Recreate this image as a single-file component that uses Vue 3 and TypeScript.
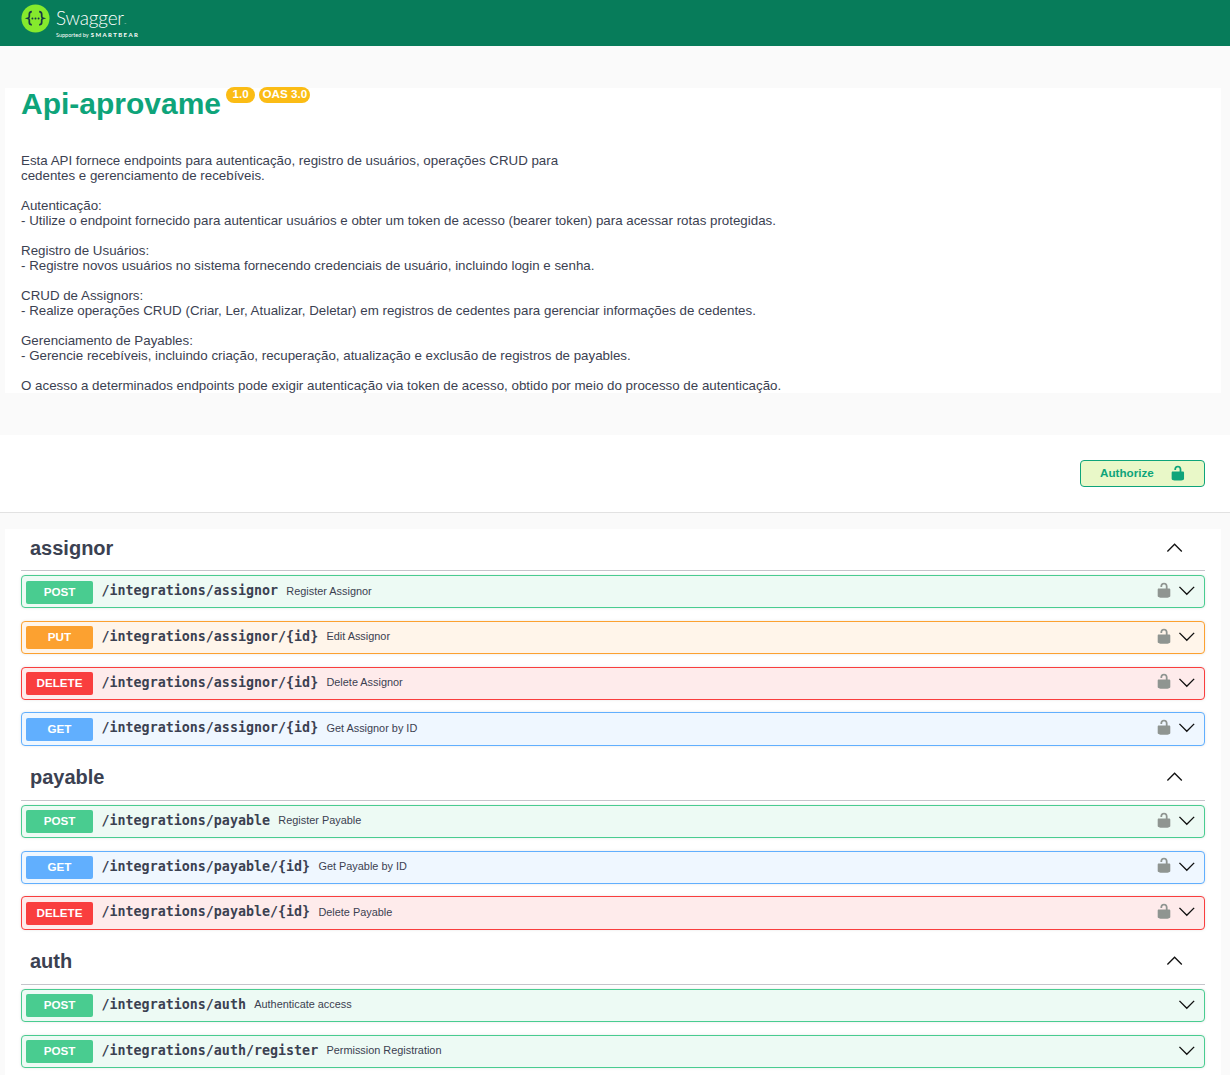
<script setup lang="ts">
type Method = 'post' | 'put' | 'delete' | 'get'

interface Operation {
  method: Method
  path: string
  summary: string
  locked: boolean
}

interface Tag {
  name: string
  operations: Operation[]
}

const description = `Esta API fornece endpoints para autenticação, registro de usuários, operações CRUD para
cedentes e gerenciamento de recebíveis.

Autenticação:
- Utilize o endpoint fornecido para autenticar usuários e obter um token de acesso (bearer token) para acessar rotas protegidas.

Registro de Usuários:
- Registre novos usuários no sistema fornecendo credenciais de usuário, incluindo login e senha.

CRUD de Assignors:
- Realize operações CRUD (Criar, Ler, Atualizar, Deletar) em registros de cedentes para gerenciar informações de cedentes.

Gerenciamento de Payables:
- Gerencie recebíveis, incluindo criação, recuperação, atualização e exclusão de registros de payables.

O acesso a determinados endpoints pode exigir autenticação via token de acesso, obtido por meio do processo de autenticação.`

const tags: Tag[] = [
  {
    name: 'assignor',
    operations: [
      { method: 'post', path: '/integrations/assignor', summary: 'Register Assignor', locked: true },
      { method: 'put', path: '/integrations/assignor/{id}', summary: 'Edit Assignor', locked: true },
      { method: 'delete', path: '/integrations/assignor/{id}', summary: 'Delete Assignor', locked: true },
      { method: 'get', path: '/integrations/assignor/{id}', summary: 'Get Assignor by ID', locked: true },
    ],
  },
  {
    name: 'payable',
    operations: [
      { method: 'post', path: '/integrations/payable', summary: 'Register Payable', locked: true },
      { method: 'get', path: '/integrations/payable/{id}', summary: 'Get Payable by ID', locked: true },
      { method: 'delete', path: '/integrations/payable/{id}', summary: 'Delete Payable', locked: true },
    ],
  },
  {
    name: 'auth',
    operations: [
      { method: 'post', path: '/integrations/auth', summary: 'Authenticate access', locked: false },
      { method: 'post', path: '/integrations/auth/register', summary: 'Permission Registration', locked: false },
    ],
  },
]

const lockPath =
  'M15.8 8H14V5.6C14 2.703 12.665 1 10 1 7.334 1 6 2.703 6 5.6V6h2v-.801C8 3.754 8.797 3 10 3c1.203 0 2 .754 2 2.199V8H4c-.553 0-1 .646-1 1.199V17c0 .549.428 1.139.951 1.307l1.197.387C5.672 18.861 6.55 19 7.1 19h5.8c.549 0 1.428-.139 1.951-.307l1.196-.387c.524-.167.953-.757.953-1.306V9.199C17 8.646 16.352 8 15.8 8z'
</script>

<template>
  <div class="page">
    <header class="topbar">
      <svg class="logo-mark" viewBox="0 0 30 30" aria-hidden="true">
        <circle cx="15" cy="15" r="14.5" fill="#85ea2d" />
        <path
          d="M11.2 8c-2.2.1-2.6 1-2.600 2.600v2.400c0 1-.5 1.500-1.500 1.800 1 .3 1.500.8 1.500 1.800v2.400c0 1.600.4 2.500 2.600 2.600M18.800 8c2.200.1 2.600 1 2.600 2.600v2.400c0 1 .5 1.500 1.500 1.800-1 .3-1.500.8-1.500 1.800v2.400c0 1.600-.4 2.500-2.600 2.600"
          fill="none"
          stroke="#173647"
          stroke-width="1.800"
        />
        <circle cx="11.800" cy="15" r="1" fill="#173647" />
        <circle cx="15" cy="15" r="1" fill="#173647" />
        <circle cx="18.200" cy="15" r="1" fill="#173647" />
      </svg>
      <div class="logo-text">
        <span class="logo-name">Swagger<small>™</small></span>
        <span class="logo-sub">Supported by <b>SMARTBEAR</b></span>
      </div>
    </header>

    <section class="info">
      <div class="title-row">
        <h1 class="title">Api-aprovame</h1>
        <span class="badge version">1.0</span>
        <span class="badge">OAS 3.0</span>
      </div>
      <p class="description">{{ description }}</p>
    </section>

    <section class="scheme">
      <button class="authorize" type="button">
        <span>Authorize</span>
        <svg class="authorize-lock" viewBox="0 0 20 20" preserveAspectRatio="none" aria-hidden="true"><path :d="lockPath" /></svg>
      </button>
    </section>

    <main class="tags">
      <section v-for="tag in tags" :key="tag.name" class="tag">
        <div class="tag-header">
          <h3 class="tag-name">{{ tag.name }}</h3>
          <svg class="tag-arrow" viewBox="0 0 20 20" aria-hidden="true"><polyline points="2.500,14 10,6.500 17.500,14" /></svg>
        </div>
        <div
          v-for="op in tag.operations"
          :key="op.method + op.path"
          class="op"
          :class="op.method"
        >
          <span class="method">{{ op.method.toUpperCase() }}</span>
          <span class="path">{{ op.path }}</span>
          <span class="summary">{{ op.summary }}</span>
          <svg v-if="op.locked" class="op-lock" viewBox="0 0 20 20" preserveAspectRatio="none" aria-hidden="true"><path :d="lockPath" /></svg>
          <svg class="op-arrow" viewBox="0 0 20 20" aria-hidden="true"><polyline points="2.500,6 10,13.500 17.500,6" /></svg>
        </div>
      </section>
    </main>
  </div>
</template>

<style>
html,
body {
  background: #fafafa;
}
</style>

<style scoped>
.page {
  font-family: 'Liberation Sans', Arial, sans-serif;
  color: #3b4151;
  height: 1075px;
  overflow: hidden;
  background: #fafafa;
}

.topbar {
  height: 46px;
  background: #077c5a;
  display: flex;
  align-items: flex-start;
  padding: 4px 0 0 21px;
  box-sizing: border-box;
}

.logo-mark {
  width: 29px;
  height: 29px;
  flex: none;
}

.logo-text {
  margin-left: 6px;
  display: flex;
  flex-direction: column;
  color: #fff;
}

.logo-name {
  font-family: Lato, sans-serif;
  font-weight: 300;
  font-size: 19px;
  letter-spacing: -0.2px;
  line-height: 20px;
  margin-top: 4px;
}

.logo-name small {
  font-size: 3px;
}

.logo-sub {
  font-family: Lato, sans-serif;
  font-size: 5.500px;
  line-height: 8px;
  margin-top: -3px;
  white-space: nowrap;
}

.logo-sub b {
  font-size: 6px;
  letter-spacing: 1.400px;
  margin-left: 1px;
}

.info {
  margin: 42px 9px 0 5px;
  height: 305px;
  background: #fff;
  padding: 0 16px;
}

.title-row {
  display: flex;
  align-items: flex-start;
}

.title {
  margin: 0;
  font-size: 30px;
  line-height: 32px;
  font-weight: 700;
  color: #0ea47a;
}

.badge {
  margin-left: 4px;
  height: 16px;
  margin-top: -1px;
  padding: 0 3.200px;
  border-radius: 8px;
  background: #fbbc15;
  color: #fff;
  font-size: 11.670px;
  font-weight: 700;
  line-height: 14px;
}

.badge.version {
  margin-left: 5px;
  padding: 0 6.500px;
}

.description {
  margin: 33px 0 0;
  font-size: 13.330px;
  line-height: 15px;
  white-space: pre-line;
}

.scheme {
  margin-top: 42px;
  height: 78px;
  box-sizing: border-box;
  background: #fff;
  border-bottom: 1px solid #e2e2e2;
  padding: 25px 25px 0 0;
  display: flex;
  justify-content: flex-end;
  align-items: flex-start;
}

.authorize {
  width: 125px;
  height: 27px;
  box-sizing: border-box;
  border: 1px solid #0ea47a;
  border-radius: 4px;
  background: #e9f8c8;
  color: #0ea47a;
  font-family: inherit;
  font-size: 11.670px;
  font-weight: 700;
  line-height: 11px;
  display: flex;
  align-items: center;
  padding: 0 0 2px 19px;
}

.authorize-lock {
  width: 17.700px;
  height: 16.300px;
  margin: 1px 0 0 15px;
  fill: #0ea47a;
  flex: none;
}

.tags {
  display: flow-root;
  margin: 16px 9px 0 5px;
  background: #fff;
  padding: 0 16px;
}

.tag-header {
  height: 43px;
  box-sizing: border-box;
  border-bottom: 1px solid #c5c5cb;
  display: flex;
  align-items: center;
  justify-content: space-between;
  padding: 0 21px 2px 9px;
  margin-bottom: 4px;
}

.tag:first-child .tag-header {
  margin-top: -0.850px;
}

.tag-name {
  margin: 0;
  font-size: 20px;
  font-weight: 700;
}

.tag-arrow {
  width: 19.200px;
  height: 19.200px;
  margin-top: -2px;
}

.tag-arrow polyline,
.op-arrow polyline {
  fill: none;
  stroke: #111;
  stroke-width: 1.400;
}

.op {
  height: 33.300px;
  box-sizing: border-box;
  display: flex;
  align-items: center;
  padding: 0 7px 0 4px;
  border: 1px solid;
  border-radius: 4px;
  margin-bottom: 12.400px;
  box-shadow: 0 0 3px rgba(0, 0, 0, 0.1);
}

.op.post {
  border-color: #49cc90;
  background: #edfaf4;
}

.op.post .method {
  background: #49cc90;
}

.op.put {
  border-color: #fca130;
  background: #fff5ea;
}

.op.put .method {
  background: #fca130;
}

.op.delete {
  border-color: #f93e3e;
  background: #feebeb;
}

.op.delete .method {
  background: #f93e3e;
}

.op.get {
  border-color: #61affe;
  background: #eff7ff;
}

.op.get .method {
  background: #61affe;
}

.method {
  width: 67px;
  height: 23px;
  margin-top: 0.400px;
  border-radius: 2px;
  color: #fff;
  font-size: 11.670px;
  font-weight: 700;
  line-height: 22px;
  text-align: center;
  flex: none;
}

.path {
  margin: 0 0 2.200px 8.500px;
  font-family: 'DejaVu Sans Mono', monospace;
  font-size: 13.330px;
  font-weight: 700;
}

.summary {
  margin: 0 0 2.600px 8.300px;
  font-size: 10.900px;
}

.op-lock {
  width: 18px;
  height: 16.500px;
  fill: #8f9591;
  margin: 0 4px 3px auto;
  flex: none;
}

.op-arrow {
  width: 19.600px;
  height: 19.600px;
  flex: none;
  margin: 0 0 1.600px auto;
}

.op-lock + .op-arrow {
  margin-left: 0;
}
</style>
